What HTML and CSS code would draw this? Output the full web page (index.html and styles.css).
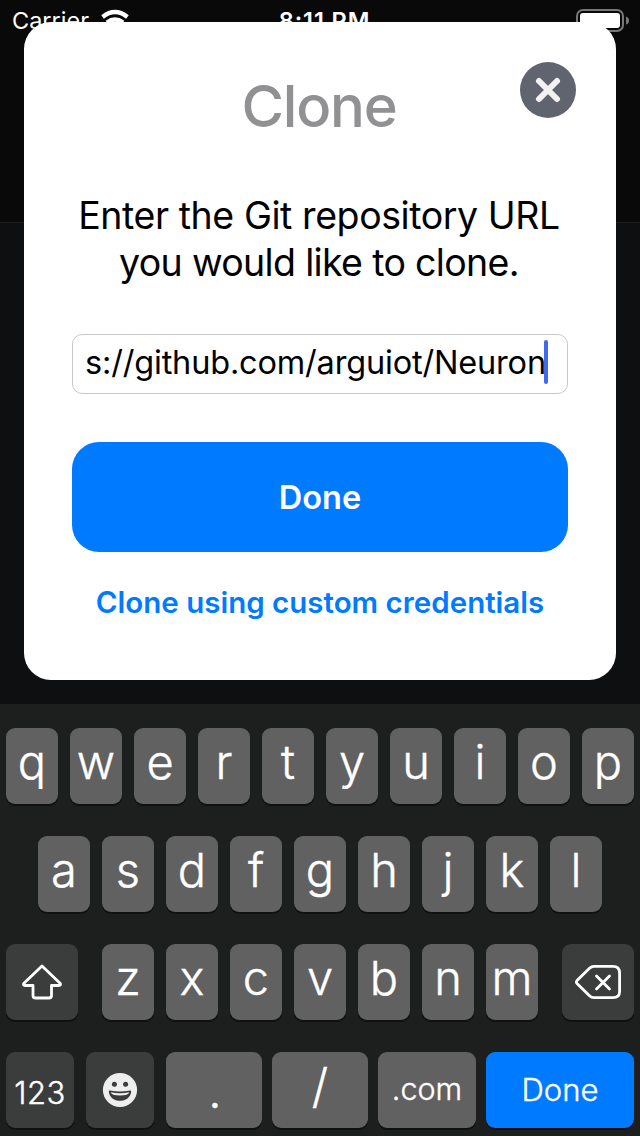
FILE: index.html
```html
<!DOCTYPE html>
<html lang="en">
<head>
<meta charset="utf-8">
<title>Clone</title>
<link rel="stylesheet" href="styles.css">
</head>
<body>
<div class="screen">
  <header class="status">
    <div class="status-left">
      <span class="carrier">Carrier</span>
      <svg class="wifi" width="28" height="22" viewBox="0 0 28 22" fill="none" stroke="#fff" stroke-width="4.4"><path d="M1.600 8Q14 -1.800 26.400 8"/><path d="M6 13.500Q14 7.500 22 13.500"/></svg>
    </div>
    <span class="time">8:11 PM</span>
    <svg class="battery" width="54" height="26" viewBox="0 0 54 26"><rect x="1" y="1" width="46" height="21" rx="6" fill="none" stroke="#777" stroke-width="2"/><rect x="4" y="4" width="40" height="15" rx="3" fill="#fff"/><path d="M50 7.500Q53 8.500 53 11.500T50 15.500Z" fill="#777"/></svg>
  </header>

  <main class="card">
    <button class="close" aria-label="Close"><svg width="56" height="56" viewBox="0 0 56 56" stroke="#f2f2f3" stroke-width="6" stroke-linecap="round"><path d="M19 19L37 37M37 19L19 37"/></svg></button>
    <h1 class="title">Clone</h1>
    <p class="message"><span class="line1">Enter the Git repository URL</span><br><span class="line2">you would like to clone.</span></p>
    <div class="field"><span class="url">s://github.com/arguiot/Neuron</span><i class="caret"></i></div>
    <button class="primary">Done</button>
    <a class="link">Clone using custom credentials</a>
  </main>

  <section class="keyboard">
    <div class="row">
      <b class="key">q</b><b class="key">w</b><b class="key">e</b><b class="key">r</b><b class="key">t</b><b class="key">y</b><b class="key">u</b><b class="key">i</b><b class="key">o</b><b class="key">p</b>
    </div>
    <div class="row">
      <b class="key">a</b><b class="key">s</b><b class="key">d</b><b class="key">f</b><b class="key">g</b><b class="key">h</b><b class="key">j</b><b class="key">k</b><b class="key">l</b>
    </div>
    <div class="row spread">
      <b class="key dark wide"><svg width="72" height="76" viewBox="0 0 72 76" fill="none" stroke="#fff" stroke-width="2.800" stroke-linejoin="round"><path d="M36 22L54.300 39.500Q55 41.500 53 41.500H45.500V51.500Q45.500 54 43 54H29.500Q27 54 27 51.500V41.500H19Q17 41.500 17.700 39.500Z"/></svg></b>
      <div class="letters"><b class="key">z</b><b class="key">x</b><b class="key">c</b><b class="key">v</b><b class="key">b</b><b class="key">n</b><b class="key">m</b></div>
      <b class="key dark wide"><svg width="72" height="76" viewBox="0 0 72 76" fill="none" stroke="#fff" stroke-width="2.800" stroke-linejoin="round" stroke-linecap="round"><path d="M32 22.300H51Q57.600 22.300 57.600 29V47.500Q57.600 53.700 51 53.700H32Q29.500 53.700 27.500 51.700L15 39.500Q13.800 38 15 36.500L27.500 24.300Q29.500 22.300 32 22.300Z"/><path d="M34.500 32L47.500 45M47.500 32L34.500 45"/></svg></b>
    </div>
    <div class="row bottom">
      <div class="modes">
        <b class="key dark mode num">123</b>
        <b class="key dark mode"><svg width="36" height="36" viewBox="0 0 36 36"><circle cx="18" cy="18" r="17.100" fill="#eee"/><circle cx="12.400" cy="12.300" r="2.500" fill="#3b3b3b"/><circle cx="23.600" cy="12.300" r="2.500" fill="#3b3b3b"/><path d="M6.800 19.300Q6.800 18.300 8 18.500Q18 20.500 28 18.500Q29.200 18.300 29.200 19.300C28.500 32 7.500 32 6.800 19.300Z" fill="#3b3b3b"/><path d="M8.800 20.300Q18 22.300 27.200 20.300Q26.500 23.600 18 23.600T8.800 20.300Z" fill="#eee"/></svg></b>
      </div>
      <div class="actions">
        <b class="key symbol dot">.</b>
        <b class="key symbol slash">/</b>
        <b class="key com">.com</b>
        <b class="key done">Done</b>
      </div>
    </div>
  </section>
</div>
</body>
</html>
```
FILE: styles.css
```css
* { box-sizing: border-box; }
body { margin: 0; background: #0e0f11; font-family: Inter, "Liberation Sans", sans-serif; }
button { border: 0; padding: 0; font: inherit; }
.screen {
  width: 640px; height: 1136px; overflow: hidden;
  display: flex; flex-direction: column;
  background: linear-gradient(#090909 222px, #1c1d1f 222px, #1c1d1f 223px, #0e0f11 223px);
}
.status {
  height: 40px; flex: none; display: grid; grid-template-columns: 1fr auto 1fr;
  color: #fff; font-size: 23.500px; line-height: 42px; padding: 0 10px 0 12px;
}
.status-left { display: flex; gap: 12px; }
.wifi { margin-top: 9px; }
.time { font-weight: 600; letter-spacing: 0.9px; padding-left: 7px; }
.battery { justify-self: end; margin-top: 9px; }
.card {
  position: relative; flex: none; width: 592px; height: 658px; margin: -18px 24px 24px;
  padding: 48px; border-radius: 27px; background: #fff;
  display: flex; flex-direction: column;
}
.close { position: absolute; top: 40px; right: 40px; width: 56px; height: 56px; border-radius: 50%; background: #60646f; }
.close svg { display: block; }
.title { margin: 0; padding-right: 2px; height: 72px; line-height: 72px; font-size: 58px; letter-spacing: -1.2px; font-weight: 500; color: #919193; text-align: center; }
.message { margin: 50px -20px 0; height: 94px; line-height: 47px; font-size: 37.500px; text-align: center; white-space: nowrap; color: #000; }
.line1 { letter-spacing: -0.42px; margin-right: 2px; }
.line2 { letter-spacing: -0.67px; margin-right: 2px; }
.field {
  height: 60px; margin-top: 48px; border: 1px solid #c8c8c8; border-radius: 10px;
  padding: 5px 12px; display: flex; white-space: nowrap; font-size: 32.500px; line-height: 44px; color: #000;
}
.url { padding-top: 1px; letter-spacing: -0.18px; }
.caret { flex: none; width: 4px; height: 44px; margin-left: -2px; border-radius: 2px; background: #4169ee; }
.primary { height: 110px; flex: none; margin-top: 48px; border-radius: 27px; background: #007aff; color: #fff; font-size: 32.500px; font-weight: 600; }
.link { margin-top: 31px; line-height: 38px; text-align: center; white-space: nowrap; color: #007aff; font-size: 29.500px; font-weight: 600; }
.keyboard {
  height: 432px; flex: none; padding: 24px 6px 8px; background: #1d1e1e;
  display: flex; flex-direction: column; gap: 32px;
}
.row { display: flex; justify-content: center; gap: 12px; }
.spread { justify-content: space-between; }
.bottom { justify-content: space-between; }
.letters, .modes { display: flex; gap: 12px; }
.actions { display: flex; gap: 10px; }
.key {
  width: 52px; height: 76px; padding-bottom: 9px; border-radius: 9px;
  display: flex; align-items: center; justify-content: center;
  background: #616161; box-shadow: 0 2px 0 #101010;
  color: #fff; font-size: 47px; font-weight: 300; line-height: 1;
  -webkit-text-stroke: 0.4px #fff;
}
.dark { background: #3b3c3c; padding: 0; }
.wide { width: 72px; }
.mode { width: 68px; }
.num { font-size: 31px; padding-top: 4px; letter-spacing: 0.5px; }
.symbol { width: 96px; }
.dot { padding: 0 0 0 2px; }
.com { width: 98px; font-size: 30.500px; padding: 0 0 1.900px; }
.done { width: 148px; font-size: 31px; padding: 0 0 1.900px; background: #007aff; }
```
